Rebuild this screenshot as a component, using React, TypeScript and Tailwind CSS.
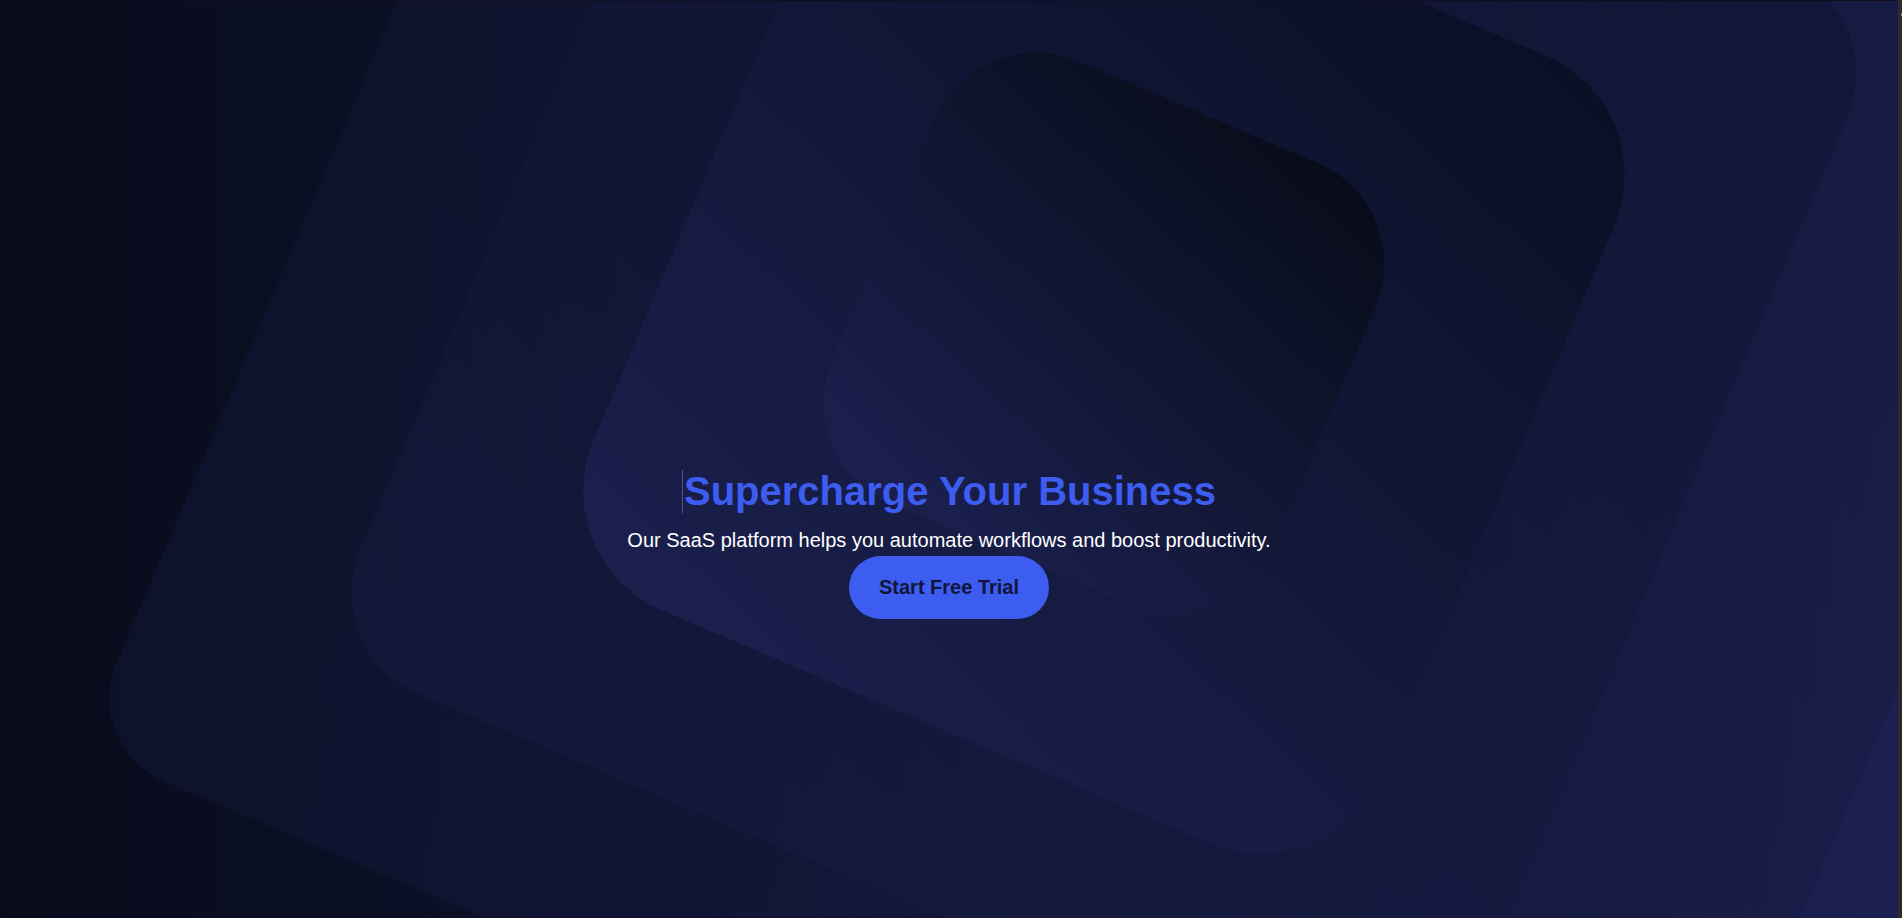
import React from "react";

export default function App() {
  return (
    <div
      className="flex h-screen w-full overflow-hidden bg-[#0a0d1c]"
      style={{ fontFamily: '"Liberation Sans", Arial, sans-serif' }}
    >
      <main className="relative flex-1 overflow-hidden border-t border-[#150c20] bg-[linear-gradient(to_right,#070b1a_0%,#1c2050_100%)]">
        {/* decorative rotated rounded squares */}
        <div className="pointer-events-none absolute left-[338px] top-[-517px] h-[1650px] w-[1650px] rotate-[23deg] rounded-[90px] bg-[linear-gradient(200deg,#0a0e24_0%,#1a1f4c_100%)] opacity-30" />
        <div className="pointer-events-none absolute left-[504px] top-[-268px] h-[1200px] w-[1200px] rotate-[23deg] rounded-[110px] bg-[linear-gradient(200deg,#0a0e24_0%,#191e4a_100%)] opacity-[0.38]" />
        <div className="pointer-events-none absolute left-[676px] top-[-96px] h-[856px] w-[856px] rotate-[23deg] rounded-[130px] bg-[linear-gradient(200deg,#0a0f25_0%,#1b204e_100%)]" />
        <div className="pointer-events-none absolute left-[864px] top-[92px] h-[480px] w-[480px] rotate-[23deg] rounded-[110px] bg-[linear-gradient(200deg,#070b17_0%,#1c2152_100%)]" />

        <section className="relative flex flex-col items-center pt-[467px] text-center">
          <h1 className="flex h-[46px] items-center text-[40px] font-bold leading-[46px] text-[#3d5cf0]">
            <span className="mr-px h-[43px] w-px bg-[#4a5896]" />
            Supercharge Your Business
          </h1>
          <p className="mt-[15px] text-[20px] leading-[23px] text-white">
            Our SaaS platform helps you automate workflows and boost productivity.
          </p>
          <button className="mt-[4px] h-[63px] rounded-full bg-[#3c5def] px-[30px] text-[20px] font-bold leading-[23px] text-[#11153a]">
            Start Free Trial
          </button>
        </section>
      </main>
      <div className="flex w-[4px] flex-col items-end bg-[#2b2b2b] pt-[13px]">
        <div className="h-[3px] w-px bg-[#8a8a8a]" />
      </div>
    </div>
  );
}
